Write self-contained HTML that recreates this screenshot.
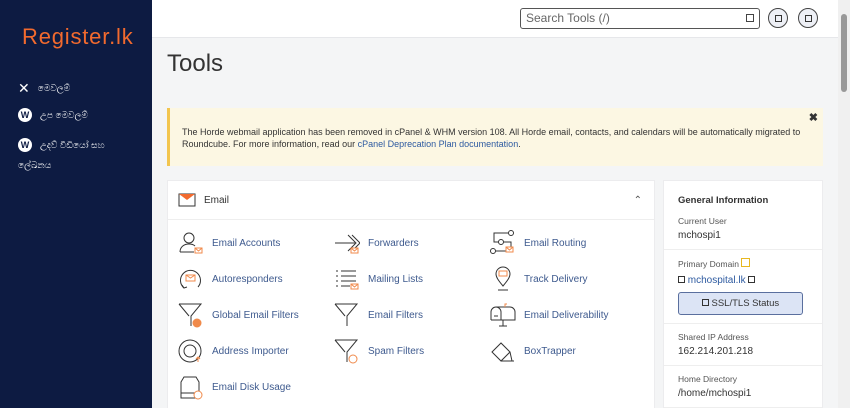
<!DOCTYPE html>
<html><head><meta charset="utf-8"><style>
*{margin:0;padding:0;box-sizing:border-box}
html,body{width:850px;height:408px;overflow:hidden}
body{background:#f4f5f6;font-family:"Liberation Sans",sans-serif;position:relative}
.side{position:absolute;left:0;top:0;width:152px;height:408px;background:#0d1b42}
.logo{position:absolute;left:22px;top:24px;color:#f26a2e;font-size:22px;letter-spacing:0.8px}
.nav{position:absolute;left:18px;color:#fff;font-size:9px;display:flex;align-items:center;gap:8px}
.hdr{position:absolute;left:152px;top:0;width:686px;height:38px;background:#fff;border-bottom:1px solid #e6e7ea}
.search{position:absolute;left:368px;top:8px;width:240px;height:21px;border:1px solid #555;border-radius:3px;font-size:12px;color:#666;padding:2px 5px}
.sq{position:absolute;width:8px;height:8px;border:1px solid #444}
.circ{position:absolute;top:8px;width:20px;height:20px;border:1px solid #444;border-radius:50%;background:#eef0f6}
.circ i{position:absolute;left:6px;top:6px;width:7px;height:7px;border:1px solid #333}
.sb{position:absolute;left:838px;top:0;width:12px;height:408px;background:#f0f0f0}
.thumb{position:absolute;left:841px;top:14px;width:6px;height:78px;background:#999;border-radius:3px}
h1{position:absolute;left:167px;top:50px;font-weight:normal;font-size:24px;color:#333}
.notice{position:absolute;left:167px;top:108px;width:656px;height:58px;background:#fcf7e3;border-left:3px solid #f2c54f;font-size:9px;color:#333;padding:18px 0 0 12px;line-height:12px;white-space:nowrap}
.notice a{color:#2d5aa0;text-decoration:none}
.x{position:absolute;right:5px;top:4px;font-weight:bold;font-size:11px}
.panel{position:absolute;background:#fff;border:1px solid #ececee}
.ehead{height:39px;border-bottom:1px solid #eee;display:flex;align-items:center;padding-left:10px;font-size:10px;color:#333;gap:8px}
.item{position:absolute;font-size:10px;color:#3e5a8e;display:flex;align-items:center;gap:8px}
.item svg{width:26px;height:26px;flex:none}
.gi{font-size:9px;color:#444}
.gi .l{font-size:8.5px;color:#555}
.gi .v{font-size:10px;color:#333;margin-top:4px}
.sec{border-bottom:1px solid #eee;padding:8px 14px 8px 14px}
</style></head><body>
<div class="side">
<div class="logo">Register.lk</div>
<div class="nav" style="top:80px"><span style="font-size:14px">✕</span>මෙවලම්</div>
<div class="nav" style="top:108px"><span style="display:inline-block;width:14px;height:14px;border-radius:50%;background:#fff;color:#0d1b42;font-size:9px;font-weight:bold;text-align:center;line-height:14px">W</span>උප මෙවලම්</div>
<div class="nav" style="top:138px"><span style="display:inline-block;width:14px;height:14px;border-radius:50%;background:#fff;color:#0d1b42;font-size:9px;font-weight:bold;text-align:center;line-height:14px">W</span>උදව් වීඩියෝ සහ</div>
<div class="nav" style="top:160px;left:18px">ලේඛනය</div>
</div>
<div class="hdr">
<div class="search">Search Tools (/)<div class="sq" style="right:5px;top:5px"></div></div>
<div class="circ" style="left:616px"><i></i></div>
<div class="circ" style="left:646px"><i></i></div>
</div>
<div class="sb"></div><div class="thumb"></div>
<h1>Tools</h1>
<div class="notice">The Horde webmail application has been removed in cPanel &amp; WHM version 108. All Horde email, contacts, and calendars will be automatically migrated to<br>Roundcube. For more information, read our <a>cPanel Deprecation Plan documentation</a>.<span class="x">✖</span></div>
<div class="panel" style="left:167px;top:180px;width:488px;height:240px">
<div class="ehead"><svg width="18" height="14" viewBox="0 0 18 14"><rect x="1" y="1" width="16" height="12" fill="#fff" stroke="#333"/><path d="M1 1l8 6 8-6z" fill="#f26a2e"/></svg>Email<span style="margin-left:auto;margin-right:12px;color:#555">⌃</span></div>
</div>
<svg width="0" height="0" style="position:absolute"><defs>
<g id="env"><rect x="17" y="18" width="7" height="5" fill="#fff" stroke="#f08a4b" stroke-width="1"/><path d="M17 18l3.5 3 3.5-3" fill="none" stroke="#f08a4b"/></g>
</defs></svg>
<div class="item" style="left:178px;top:230px"><svg viewBox="0 0 26 26" fill="none" stroke="#333"><circle cx="11" cy="8" r="5"/><path d="M2 22c0-5 4-8 9-8 3 0 5 1 6 2M2 22h14"/><use href="#env"/></svg>Email Accounts</div>
<div class="item" style="left:178px;top:266px"><svg viewBox="0 0 26 26" fill="none" stroke="#333"><path d="M6 22A10 10 0 1 1 20 21"/><path d="M4 19l2 3 3-1"/><rect x="8" y="9" width="9" height="6" stroke="#f08a4b"/><path d="M8 9l4.5 3 4.5-3" stroke="#f08a4b"/></svg>Autoresponders</div>
<div class="item" style="left:178px;top:302px"><svg viewBox="0 0 26 26" fill="none" stroke="#333"><path d="M1 2h22L13 14v10M1 2l10 12"/><circle cx="19" cy="21" r="4" fill="#f08a4b" stroke="#f08a4b"/></svg>Global Email Filters</div>
<div class="item" style="left:178px;top:338px"><svg viewBox="0 0 26 26" fill="none" stroke="#333"><circle cx="12" cy="13" r="11"/><circle cx="12" cy="13" r="6"/><path d="M20 24v-5m-2 2l2-2 2 2" stroke="#f08a4b"/></svg>Address Importer</div>
<div class="item" style="left:178px;top:374px"><svg viewBox="0 0 26 26" fill="none" stroke="#333"><path d="M3 24V8l3-5h12l3 5v16zM3 19h18"/><circle cx="20" cy="21" r="4" fill="#fff" stroke="#f08a4b"/></svg>Email Disk Usage</div>
<div class="item" style="left:334px;top:230px"><svg viewBox="0 0 26 26" fill="none" stroke="#333"><path d="M1 13h20M14 5l8 8-8 8M18 5l8 8-8 8"/><use href="#env"/></svg>Forwarders</div>
<div class="item" style="left:334px;top:266px"><svg viewBox="0 0 26 26" fill="none" stroke="#333"><path d="M7 5h15M7 10h15M7 15h15M7 20h9M2 5h2M2 10h2M2 15h2M2 20h2"/><use href="#env"/></svg>Mailing Lists</div>
<div class="item" style="left:334px;top:302px"><svg viewBox="0 0 26 26" fill="none" stroke="#333"><path d="M1 2h22L13 14v10M1 2l10 12"/></svg>Email Filters</div>
<div class="item" style="left:334px;top:338px"><svg viewBox="0 0 26 26" fill="none" stroke="#333"><path d="M1 2h22L13 14v10M1 2l10 12"/><circle cx="19" cy="21" r="4" stroke="#f08a4b"/></svg>Spam Filters</div>
<div class="item" style="left:490px;top:230px"><svg viewBox="0 0 26 26" fill="none" stroke="#333"><circle cx="21" cy="3" r="2.5"/><circle cx="11" cy="12" r="2.5"/><circle cx="3" cy="21" r="2.5"/><path d="M18 3H4v9h4M14 12h7v9h-3M6 21h10"/><use href="#env" transform="translate(-1,-1)"/></svg>Email Routing</div>
<div class="item" style="left:490px;top:266px"><svg viewBox="0 0 26 26" fill="none" stroke="#333"><path d="M13 20C8 14 6 11 6 8a7 7 0 0 1 14 0c0 3-2 6-7 12zM8 24h10"/><rect x="9" y="5" width="8" height="5" stroke="#f08a4b"/></svg>Track Delivery</div>
<div class="item" style="left:490px;top:302px"><svg viewBox="0 0 26 26" fill="none" stroke="#333"><path d="M1 18V10a5 5 0 0 1 10 0v8h14v-8a5 5 0 0 0-5-5H6M1 18h10M13 18v6M9 24h8M4 14h4"/><path d="M15 5V2h2" stroke="#f08a4b"/></svg>Email Deliverability</div>
<div class="item" style="left:490px;top:338px"><svg viewBox="0 0 26 26" fill="none" stroke="#333"><path d="M2 14l9-9 9 9-9 9zM11 23h13M20 14l2 9"/></svg>BoxTrapper</div>
<div class="panel gi" style="left:663px;top:180px;width:160px;height:240px">
<div style="padding:14px 14px 6px;font-weight:bold;font-size:9.5px;color:#333">General Information</div>
<div class="sec" style="padding-top:4px"><div class="l">Current User</div><div class="v">mchospi1</div></div>
<div class="sec"><div class="l">Primary Domain <span style="display:inline-block;width:9px;height:9px;border:1px solid #e8b820"></span></div>
<div class="v" style="color:#2d5aa0;margin-top:6px"><span style="display:inline-block;width:7px;height:7px;border:1px solid #333"></span> mchospital.lk <span style="display:inline-block;width:7px;height:7px;border:1px solid #333"></span></div>
<div style="margin-top:6px;width:125px;height:23px;background:#dce4f5;border:1px solid #5a6f9e;border-radius:3px;text-align:center;line-height:21px;font-size:9.5px;color:#333"><span style="display:inline-block;width:7px;height:7px;border:1px solid #333"></span> SSL/TLS Status</div></div>
<div class="sec"><div class="l">Shared IP Address</div><div class="v">162.214.201.218</div></div>
<div class="sec"><div class="l">Home Directory</div><div class="v">/home/mchospi1</div></div>
</div>
</body></html>
